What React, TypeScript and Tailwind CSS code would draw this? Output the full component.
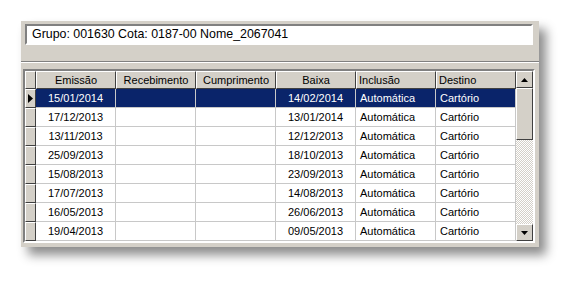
type Row = { emissao: string; baixa: string };

const rows: Row[] = [
  { emissao: "15/01/2014", baixa: "14/02/2014" },
  { emissao: "17/12/2013", baixa: "13/01/2014" },
  { emissao: "13/11/2013", baixa: "12/12/2013" },
  { emissao: "25/09/2013", baixa: "18/10/2013" },
  { emissao: "15/08/2013", baixa: "23/09/2013" },
  { emissao: "17/07/2013", baixa: "14/08/2013" },
  { emissao: "16/05/2013", baixa: "26/06/2013" },
  { emissao: "19/04/2013", baixa: "09/05/2013" },
];

const headers = [
  { label: "Emissão", center: true },
  { label: "Recebimento", center: true },
  { label: "Cumprimento", center: true },
  { label: "Baixa", center: true },
  { label: "Inclusão", center: false },
  { label: "Destino", center: false },
];

function Arrow({ down }: { down?: boolean }) {
  return (
    <svg width="7" height="4" viewBox="0 0 7 4" className={down ? "rotate-180" : ""}>
      <path d="M3.5 0L7 4H0z" fill="#000" />
    </svg>
  );
}

function ScrollButton({ down }: { down?: boolean }) {
  return (
    <div className="h-[17px] w-[17px] bg-[#d4d0c8] border border-t-white border-l-white border-r-[#404040] border-b-[#404040] flex items-center justify-center">
      <Arrow down={down} />
    </div>
  );
}

export default function App() {
  return (
    <div className="min-h-screen bg-white pt-[21px] pl-[21px] font-['Liberation_Sans',Arial,sans-serif]">
      <div className="w-[518px] h-[226px] bg-[#d4d0c8] flex flex-col shadow-[7px_8px_10px_rgba(0,0,0,0.45)]">
        {/* filtro */}
        <div className="mt-[3px] ml-[4px] w-[508px] h-[21px] border-2 border-t-[#808080] border-l-[#808080] border-b-white border-r-white bg-white flex items-center pl-[5px] text-[12.4px] text-black leading-none">
          Grupo: 001630 Cota: 0187-00 Nome_2067041
        </div>

        <div className="mt-[16px] h-[2px] border-t border-t-[#808080] border-b border-b-white" />

        {/* grade */}
        <div className="mt-[6px] ml-[2px] w-[512px] border-2 border-t-[#808080] border-l-[#808080] border-b-white border-r-white flex">
          <div className="flex flex-col">
            <div className="flex h-[18px] text-[11px] text-black">
              <div className="w-[11px] bg-[#d4d0c8] border border-t-white border-l-white border-r-[#404040] border-b-[#404040]" />
              {headers.map((h) => (
                <div
                  key={h.label}
                  className={`w-[80px] bg-[#d4d0c8] border border-t-white border-l-white border-r-[#404040] border-b-[#404040] flex items-center ${h.center ? "justify-center" : "pl-[2px]"}`}
                >
                  {h.label}
                </div>
              ))}
            </div>
            {rows.map((r, i) => {
              const sel = i === 0;
              const cell = `w-[80px] h-[19px] border-r border-b border-[#c8c8c8] flex items-center ${sel ? "bg-[#0a246a] text-white" : "bg-white text-black"}`;
              return (
                <div key={r.emissao} className="flex text-[11px]">
                  <div className="w-[11px] h-[19px] bg-[#d4d0c8] border border-t-white border-l-white border-r-[#404040] border-b-[#404040] flex items-center justify-center">
                    {sel && (
                      <svg width="5" height="9" viewBox="0 0 5 9">
                        <path d="M0 0L5 4.5L0 9z" fill="#000" />
                      </svg>
                    )}
                  </div>
                  <div className={`${cell} justify-center`}>{r.emissao}</div>
                  <div className={cell} />
                  <div className={cell} />
                  <div className={`${cell} justify-center`}>{r.baixa}</div>
                  <div className={`${cell} pl-[4px]`}>Automática</div>
                  <div className={`${cell} pl-[4px]`}>Cartório</div>
                </div>
              );
            })}
          </div>

          {/* barra de rolagem */}
          <div className="w-[17px] flex flex-col">
            <ScrollButton />
            <div className="h-[52px] bg-[#d4d0c8] border border-t-white border-l-white border-r-[#404040] border-b-[#404040]" />
            <div className="flex-1 bg-[repeating-conic-gradient(#d4d0c8_0_25%,#ffffff_0_50%)] bg-[length:2px_2px]" />
            <ScrollButton down />
          </div>
        </div>
      </div>
    </div>
  );
}
